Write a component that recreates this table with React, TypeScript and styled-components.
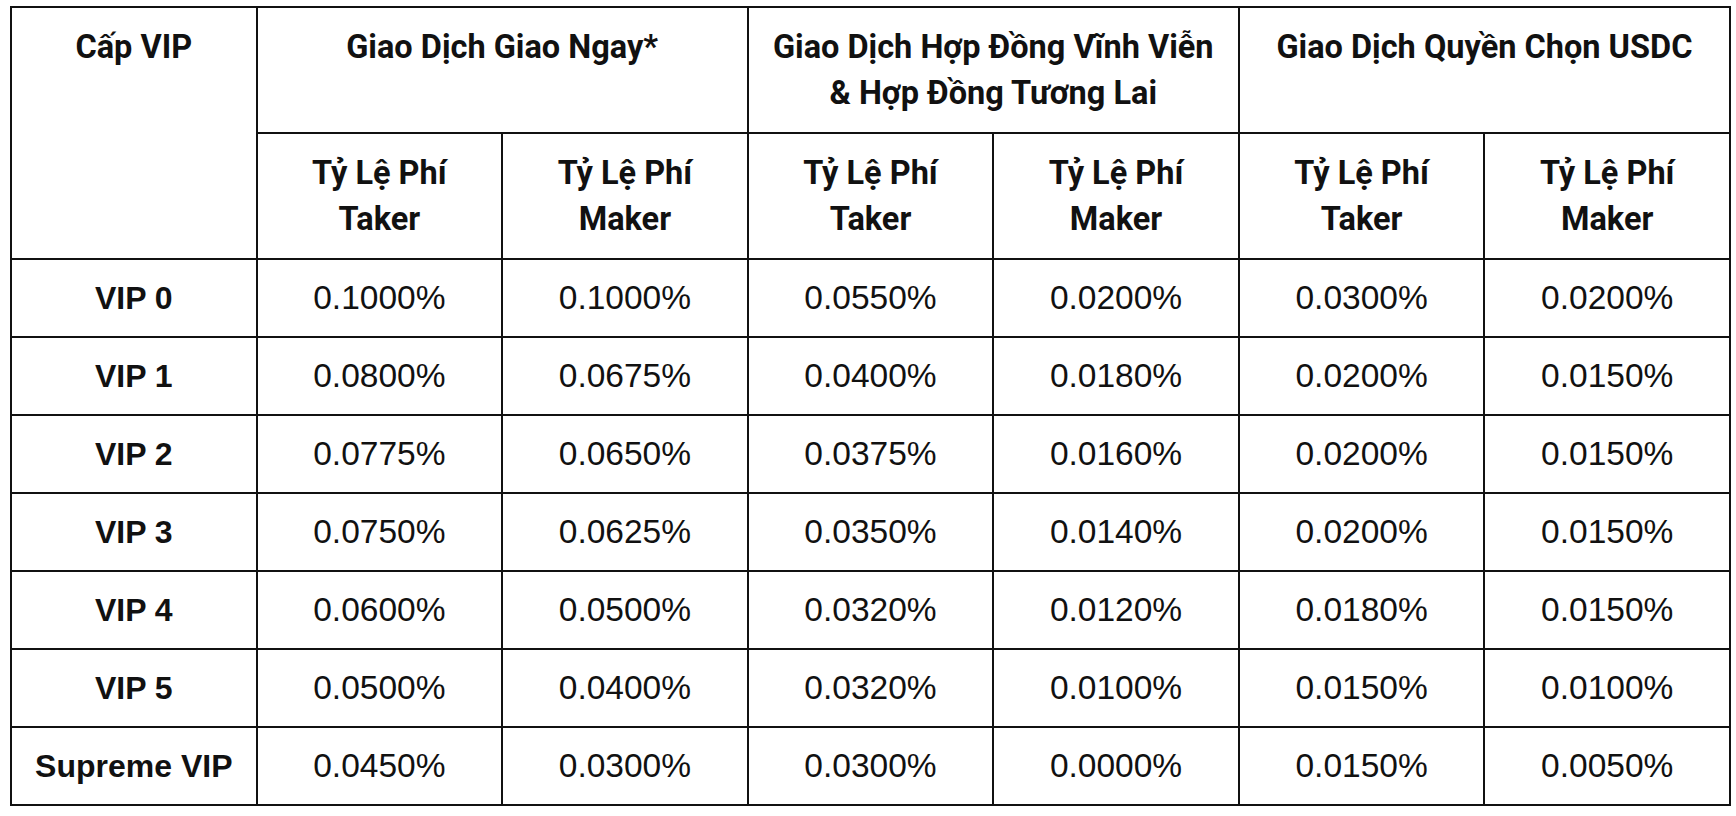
import React from 'react';
import styled, { createGlobalStyle } from 'styled-components';

const GlobalStyle = createGlobalStyle`
  html, body {
    margin: 0;
    background: #ffffff;
  }
  body {
    padding: 6px 0 0 10px;
    font-family: 'Liberation Sans', Arial, sans-serif;
    color: #111111;
  }
`;

const Table = styled.table`
  width: 1721px;
  border-collapse: collapse;
  table-layout: fixed;
  border: 2px solid #111111;
`;

const HeadCell = styled.th`
  border: 2px solid #111111;
  padding: 16px 6px;
  vertical-align: top;
  text-align: center;
  font-family: Roboto, 'Noto Sans', sans-serif;
  font-weight: 700;
  font-size: 32.5px;
  line-height: 46px;
  color: #111111;
`;

const LevelCell = styled.td`
  border: 2px solid #111111;
  padding: 15px 6px;
  text-align: center;
  vertical-align: middle;
  font-weight: 700;
  font-size: 32px;
  line-height: 46px;
  white-space: nowrap;
`;

const RateCell = styled.td`
  border: 2px solid #111111;
  padding: 15px 6px;
  text-align: center;
  vertical-align: middle;
  font-weight: 400;
  font-size: 33.5px;
  line-height: 46px;
`;

type Tier = { level: string; rates: string[] };

const tiers: Tier[] = [
  { level: 'VIP 0', rates: ['0.1000%', '0.1000%', '0.0550%', '0.0200%', '0.0300%', '0.0200%'] },
  { level: 'VIP 1', rates: ['0.0800%', '0.0675%', '0.0400%', '0.0180%', '0.0200%', '0.0150%'] },
  { level: 'VIP 2', rates: ['0.0775%', '0.0650%', '0.0375%', '0.0160%', '0.0200%', '0.0150%'] },
  { level: 'VIP 3', rates: ['0.0750%', '0.0625%', '0.0350%', '0.0140%', '0.0200%', '0.0150%'] },
  { level: 'VIP 4', rates: ['0.0600%', '0.0500%', '0.0320%', '0.0120%', '0.0180%', '0.0150%'] },
  { level: 'VIP 5', rates: ['0.0500%', '0.0400%', '0.0320%', '0.0100%', '0.0150%', '0.0100%'] },
  { level: 'Supreme VIP', rates: ['0.0450%', '0.0300%', '0.0300%', '0.0000%', '0.0150%', '0.0050%'] },
];

const feeKinds = ['Taker', 'Maker', 'Taker', 'Maker', 'Taker', 'Maker'];

export default function App() {
  return (
    <>
      <GlobalStyle />
      <Table>
        <thead>
          <tr>
            <HeadCell rowSpan={2}>Cấp VIP</HeadCell>
            <HeadCell colSpan={2}>Giao Dịch Giao Ngay*</HeadCell>
            <HeadCell colSpan={2}>
              Giao Dịch Hợp Đồng Vĩnh Viễn
              <br />
              &amp; Hợp Đồng Tương Lai
            </HeadCell>
            <HeadCell colSpan={2}>Giao Dịch Quyền Chọn USDC</HeadCell>
          </tr>
          <tr>
            {feeKinds.map((kind, i) => (
              <HeadCell key={i}>
                Tỷ Lệ Phí
                <br />
                {kind}
              </HeadCell>
            ))}
          </tr>
        </thead>
        <tbody>
          {tiers.map((tier) => (
            <tr key={tier.level}>
              <LevelCell>{tier.level}</LevelCell>
              {tier.rates.map((rate, i) => (
                <RateCell key={i}>{rate}</RateCell>
              ))}
            </tr>
          ))}
        </tbody>
      </Table>
    </>
  );
}
